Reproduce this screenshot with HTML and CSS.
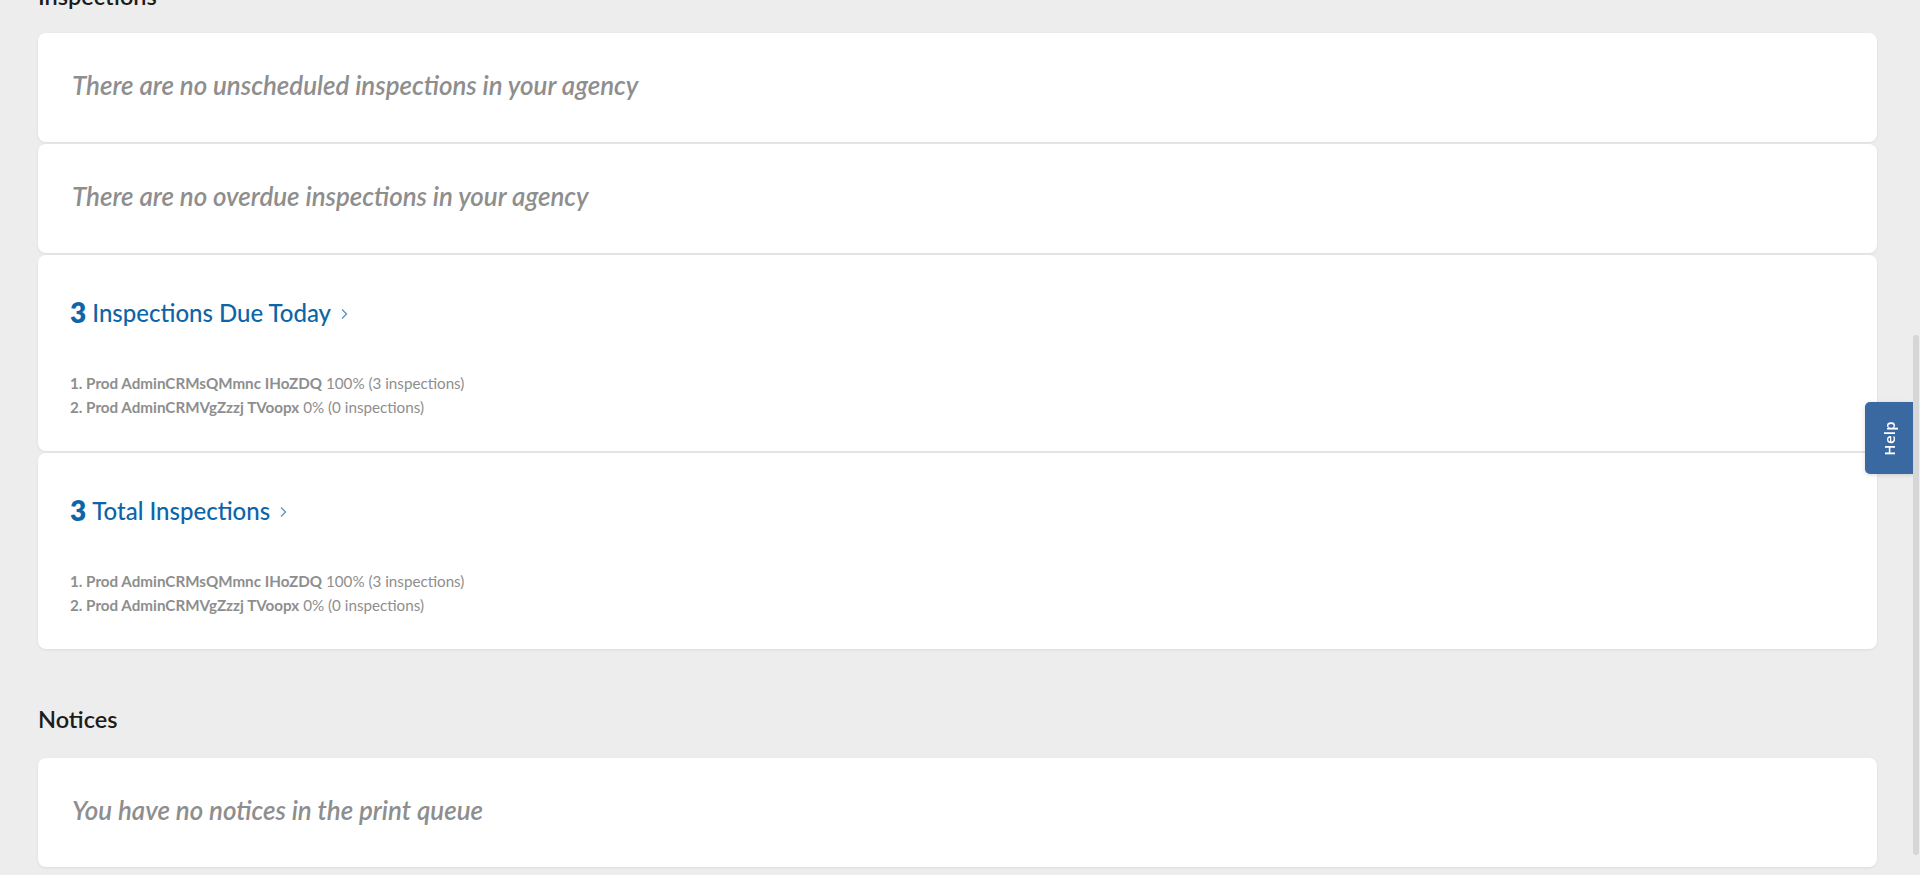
FILE: index.html
```html
<!DOCTYPE html>
<html lang="en">
<head>
<meta charset="utf-8">
<title>Dashboard</title>
<link rel="stylesheet" href="styles.css">
</head>
<body>
<main class="page">
  <section class="section section-inspections">
    <h2 class="section-title">Inspections</h2>
    <div class="card-list">
      <div class="card card-empty">
        <p class="empty-msg">There are no unscheduled inspections in your agency</p>
      </div>
      <div class="card card-empty">
        <p class="empty-msg">There are no overdue inspections in your agency</p>
      </div>
      <div class="card card-stat">
        <a class="stat-title" href="#">
          <span class="stat-count">3</span>
          <span class="stat-label">Inspections Due Today</span>
          <svg class="chev" width="7" height="12" viewBox="0 0 7 12"><path d="M1 1.5l4.5 4.5L1 10.5" fill="none" stroke="#5b8fc6" stroke-width="1.3"/></svg>
        </a>
        <ol class="stat-list">
          <li><b>1. Prod AdminCRMsQMmnc IHoZDQ</b> 100% (3 inspections)</li>
          <li><b>2. Prod AdminCRMVgZzzj TVoopx</b> 0% (0 inspections)</li>
        </ol>
      </div>
      <div class="card card-stat">
        <a class="stat-title" href="#">
          <span class="stat-count">3</span>
          <span class="stat-label">Total Inspections</span>
          <svg class="chev" width="7" height="12" viewBox="0 0 7 12"><path d="M1 1.5l4.5 4.5L1 10.5" fill="none" stroke="#5b8fc6" stroke-width="1.3"/></svg>
        </a>
        <ol class="stat-list">
          <li><b>1. Prod AdminCRMsQMmnc IHoZDQ</b> 100% (3 inspections)</li>
          <li><b>2. Prod AdminCRMVgZzzj TVoopx</b> 0% (0 inspections)</li>
        </ol>
      </div>
    </div>
  </section>
  <section class="section section-notices">
    <h2 class="section-title">Notices</h2>
    <div class="card-list">
      <div class="card card-empty">
        <p class="empty-msg">You have no notices in the print queue</p>
      </div>
    </div>
  </section>
</main>
<button class="help-tab" type="button"><span class="help-text">Help</span></button>
<div class="scrollbar"><div class="scroll-thumb"></div></div>
</body>
</html>
```
FILE: styles.css
```css
html, body {
  margin: 0;
  padding: 0;
  height: 100%;
  overflow: hidden;
}
body {
  background: #ededed;
  font-family: Lato, "Open Sans", "Liberation Sans", sans-serif;
  color: #222;
}
.page {
  padding: 0 43px 0 38px;
  margin-top: -19px;
}
.section-title {
  margin: 0 0 24px 0;
  font-size: 23.5px;
  line-height: 30px;
  font-weight: 600;
  color: #1c1c1c;
}
.section-inspections .section-title {
  margin-bottom: 22px;
}
.section-notices {
  margin-top: 55px;
}
.card-list {
  display: flex;
  flex-direction: column;
  gap: 2px;
}
.card {
  background: #fff;
  border-radius: 8px;
  box-shadow: 0 1px 3px rgba(0, 0, 0, 0.07);
}
.card-empty {
  padding: 38px 32px 42px 34px;
}
.empty-msg {
  margin: 0;
  font-size: 25.9px;
  line-height: 29px;
  font-style: italic;
  font-weight: 600;
  color: #8e8e8e;
}
.card-stat {
  padding: 32px;
}
.stat-title {
  display: flex;
  align-items: center;
  height: 50px;
  text-decoration: none;
  color: #0d65a8;
}
.stat-count {
  font-size: 28px;
  font-weight: 800;
  margin-right: 6px;
}
.stat-label {
  font-size: 24px;
  font-weight: 500;
}
.chev {
  margin-left: 10px;
  margin-top: 3px;
}
.stat-list {
  list-style: none;
  margin: 34px 0 0 0;
  padding: 0;
  font-size: 15.2px;
  line-height: 24px;
  color: #8e8e8e;
}
.stat-list b {
  font-weight: 700;
}
.help-tab {
  position: fixed;
  top: 402px;
  right: 7px;
  width: 48px;
  height: 72px;
  border: 0;
  padding: 0;
  border-radius: 5px 0 0 5px;
  background: #3a68a0;
  box-shadow: 0 1px 4px rgba(0, 0, 0, 0.15);
  display: flex;
  align-items: center;
  justify-content: center;
  cursor: pointer;
}
.help-text {
  writing-mode: vertical-rl;
  transform: rotate(180deg);
  color: #fff;
  font-family: "Open Sans", Lato, "Liberation Sans", sans-serif;
  font-size: 15px;
  font-weight: 600;
  letter-spacing: 0.3px;
}
.scrollbar {
  position: fixed;
  top: 0;
  right: 0;
  width: 7px;
  height: 100%;
  background: #ededed;
}
.scroll-thumb {
  position: absolute;
  top: 335px;
  left: 0;
  width: 6px;
  height: 520px;
  border-radius: 3px;
  background: #d6d6d6;
}
```
